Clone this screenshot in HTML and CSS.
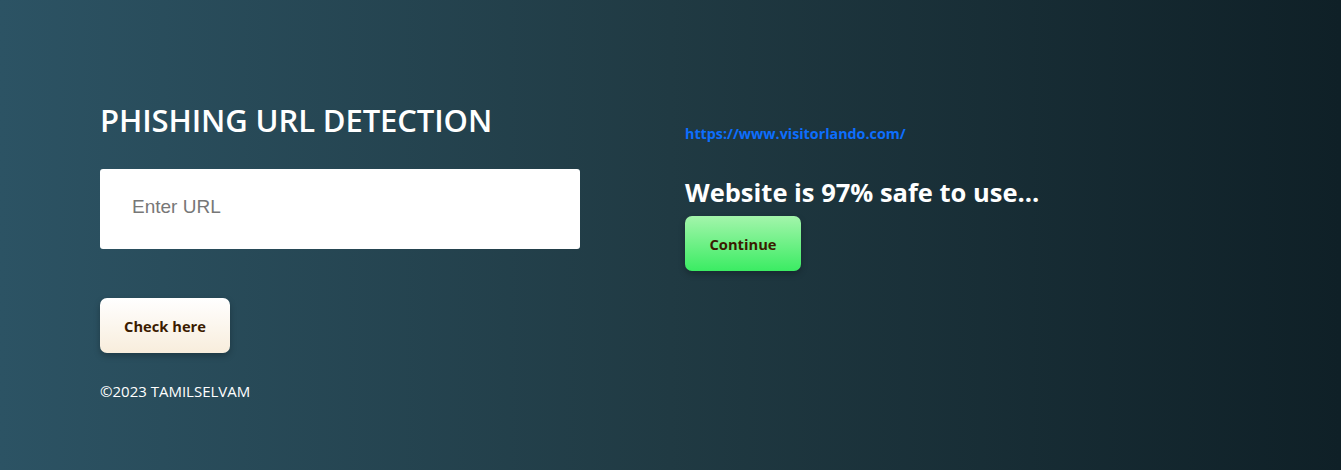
FILE: index.html
```html
<!DOCTYPE html>
<html>
<head>
<meta charset="utf-8">
<link rel="stylesheet" href="styles.css">
</head>
<body>
<div class="page">
  <div class="left">
    <h1 class="title">PHISHING URL DETECTION</h1>
    <input class="url-input" type="text" placeholder="Enter URL">
    <button class="btn btn-check">Check here</button>
    <p class="footer">©2023 TAMILSELVAM</p>
  </div>
  <div class="right">
    <a class="result-link" href="#">https://www.visitorlando.com/</a>
    <h2 class="result">Website is 97% safe to use...</h2>
    <button class="btn btn-continue">Continue</button>
  </div>
</div>
</body>
</html>
```
FILE: styles.css
```css
html, body { margin: 0; padding: 0; height: 100%; }
body {
  background: linear-gradient(to right, #2c5364, #203a43, #0f2027);
  font-family: "Open Sans", "Noto Sans", sans-serif;
  color: #fff;
}
.page {
  display: flex;
  padding: 100px 0 0 100px;
  gap: 105px;
}
.left { width: 480px; display: flex; flex-direction: column; align-items: flex-start; }
.title {
  margin: 0;
  font-size: 31px;
  font-weight: 600;
  line-height: 40px;
  letter-spacing: -0.1px;
}
.url-input {
  margin-top: 29px;
  width: 480px;
  height: 80px;
  box-sizing: border-box;
  border: none;
  border-radius: 3px;
  padding: 0 32px 4px;
  font-family: "Liberation Sans", Arial, sans-serif;
  font-size: 19px;
  outline: none;
}
.url-input::placeholder { color: #777; }
.btn {
  border: none;
  border-radius: 7px;
  font-family: "Open Sans", "Noto Sans", sans-serif;
  font-weight: 700;
  font-size: 14.7px;
  color: #3b1b00;
  height: 55px;
  box-shadow: 0 3px 6px rgba(0,0,0,0.25);
  cursor: pointer;
}
.btn-check {
  margin-top: 49px;
  width: 130px;
  background: linear-gradient(to bottom, #ffffff, #f8eddc);
}
.footer {
  margin: 28px 0 0;
  font-size: 15px;
  line-height: 20px;
}
.right { display: flex; flex-direction: column; align-items: flex-start; padding-top: 24px; }
.result-link {
  color: #0d6efd;
  font-weight: 700;
  font-size: 14.3px;
  line-height: 20px;
  text-decoration: none;
}
.result {
  margin: 30px 0 0;
  font-size: 25.5px;
  font-weight: 700;
  line-height: 36px;
}
.btn-continue {
  margin-top: 6px;
  width: 116px;
  background: linear-gradient(to bottom, #a3f5ab, #3bec63);
}
```
